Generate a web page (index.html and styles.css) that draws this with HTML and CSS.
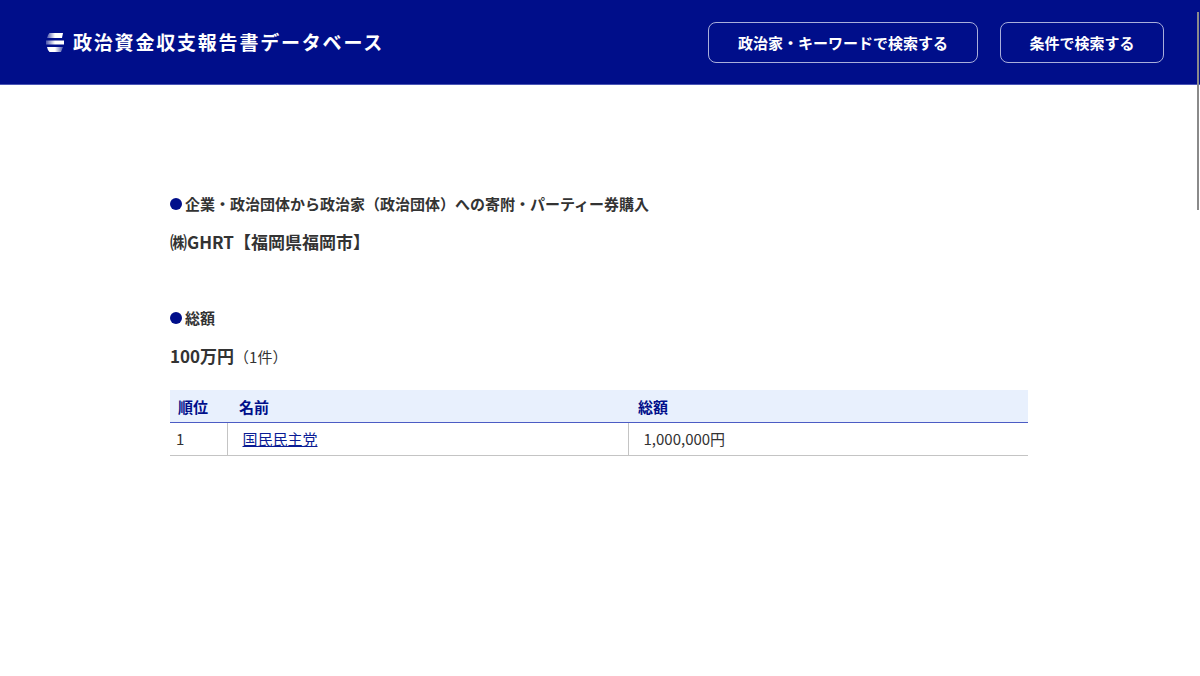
FILE: index.html
```html
<!DOCTYPE html>
<html lang="ja">
<head>
<meta charset="utf-8">
<title>政治資金収支報告書データベース</title>
<link rel="stylesheet" href="styles.css">
</head>
<body>
<header class="site-header">
  <a class="brand" href="#">
    <svg class="brand-icon" width="18" height="19" viewBox="0 0 18 19" aria-hidden="true">
      <defs>
        <linearGradient id="fade" x1="0" x2="1" y1="0" y2="0">
          <stop offset="0" stop-color="#fff" stop-opacity="0.3"/>
          <stop offset="0.5" stop-color="#fff"/>
          <stop offset="1" stop-color="#fff"/>
        </linearGradient>
        <linearGradient id="fadeR" x1="0" x2="1" y1="0" y2="0">
          <stop offset="0" stop-color="#fff"/>
          <stop offset="0.5" stop-color="#fff"/>
          <stop offset="1" stop-color="#fff" stop-opacity="0.3"/>
        </linearGradient>
      </defs>
      <path d="M3.5 0H17L16 5H1Q1.5 2 3.5 0Z" fill="url(#fade)"/>
      <path d="M0 7.5H18V11.5H0Z" fill="url(#fade)"/>
      <path d="M1 14H17L15 19H3.5Q1.5 17 1 14Z" fill="url(#fadeR)"/>
    </svg>
    <span class="brand-name">政治資金収支報告書データベース</span>
  </a>
  <nav class="header-nav">
    <a class="nav-button nav-button-wide" href="#">政治家・キーワードで検索する</a>
    <a class="nav-button nav-button-narrow" href="#">条件で検索する</a>
  </nav>
</header>
<main class="content">
  <section class="block block-donor">
    <h2 class="block-title">企業・政治団体から政治家（政治団体）への寄附・パーティー券購入</h2>
    <p class="block-value">㈱GHRT【福岡県福岡市】</p>
  </section>
  <section class="block block-total">
    <h2 class="block-title">総額</h2>
    <p class="block-value">100万円<span class="count">（1件）</span></p>
  </section>
  <table class="ranking">
    <thead>
      <tr><th class="col-rank">順位</th><th class="col-name">名前</th><th class="col-total">総額</th></tr>
    </thead>
    <tbody>
      <tr><td>1</td><td class="cell-name"><a href="#">国民民主党</a></td><td class="cell-total">1,000,000円</td></tr>
    </tbody>
  </table>
</main>
<div class="scrollbar" aria-hidden="true"></div>
</body>
</html>
```
FILE: styles.css
```css
* { box-sizing: border-box; }
html, body { margin: 0; padding: 0; height: 100%; overflow: hidden; }
body {
  background: #fff;
  color: #333;
  font-family: "Noto Sans CJK JP", "Noto Sans", sans-serif;
  font-size: 15px;
}
.site-header {
  height: 85px;
  background: #000e8a;
  border-bottom: 1px solid #4a55b5;
  display: flex;
  align-items: center;
  justify-content: space-between;
  padding: 0 36px 0 46px;
}
.brand {
  display: flex;
  align-items: center;
  gap: 9px;
  color: #fff;
  text-decoration: none;
}
.brand-icon { flex: none; }
.brand-name {
  font-size: 19px;
  font-weight: 700;
  letter-spacing: 1.8px;
  line-height: 24px;
}
.header-nav { display: flex; gap: 22px; }
.nav-button {
  height: 41px;
  display: flex;
  align-items: center;
  justify-content: center;
  border: 1px solid #a9aedb;
  border-radius: 8px;
  color: #fff;
  font-size: 15px;
  font-weight: 700;
  text-decoration: none;
}
.nav-button-wide { width: 270px; }
.nav-button-narrow { width: 164px; }
.content { width: 858px; margin-left: 170px; padding-top: 107px; }
.block-donor { margin-bottom: 52px; }
.block-total { margin-bottom: 21px; }
.block-title {
  margin: 0;
  font-size: 15px;
  font-weight: 700;
  line-height: 24px;
  display: flex;
  align-items: center;
  gap: 3px;
}
.block-title::before {
  content: "";
  flex: none;
  width: 12px;
  height: 12px;
  border-radius: 50%;
  background: #000e8a;
}
.block-value {
  margin: 14px 0 0;
  font-size: 17px;
  font-weight: 700;
  line-height: 24px;
}
.count { font-size: 15px; font-weight: 400; }
.ranking {
  width: 100%;
  border-collapse: collapse;
  table-layout: fixed;
  font-size: 15px;
}
.ranking th {
  height: 32px;
  padding: 2px 8px 0;
  text-align: left;
  background: #e8f0fd;
  color: #000e8a;
  font-weight: 700;
  border-bottom: 1px solid #4c5cc4;
}
.col-rank { width: 57px; }
.col-name { width: 401px; }
.ranking th.col-name { padding-left: 12px; }
.ranking th.col-total { padding-left: 10px; }
.ranking td {
  height: 33px;
  padding: 0 8px 0 6px;
  border-bottom: 1px solid #c4c4c4;
}
.ranking td + td { border-left: 1px solid #c4c4c4; padding-left: 15px; }
.cell-name a { color: #0a1c94; }
.scrollbar {
  position: absolute;
  top: 12px;
  right: 1px;
  width: 2px;
  height: 198px;
  background: #8a8a8a;
}
```
